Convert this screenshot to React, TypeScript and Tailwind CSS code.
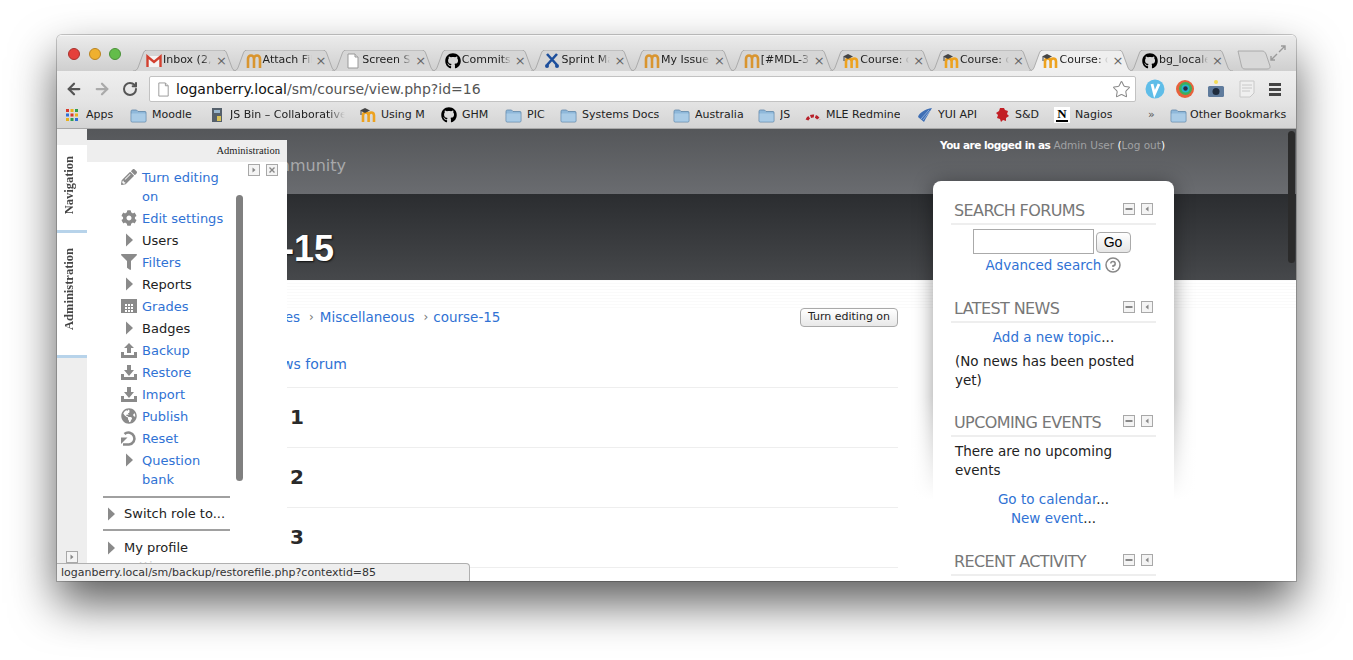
import React from 'react';
import {ArrowLeft, ArrowRight, RotateCw, Star} from 'lucide-react';
import {FaCog, FaFilter, FaGithub, FaGlobeAmericas, FaPencilAlt} from 'react-icons/fa';

const sans = 'font-["DejaVu_Sans",sans-serif]';

const MoodleM = ({cap = false}: {cap?: boolean}) => (
  <svg viewBox="0 0 16 16" className="w-4 h-4 shrink-0">
    <path
      d={cap ? 'M3 15V8.500C3 6.500 4 5.500 5.800 5.500S8.600 6.500 8.600 8.500V15M8.600 8.500C8.600 6.500 9.600 5.500 11.200 5.500S14 6.500 14 8.500V15' : 'M2 15V6C2 3.500 3.300 2.500 5 2.500S8 3.500 8 6V15M8 6C8 3.500 9.300 2.500 11 2.500S14 3.500 14 6V15'}
      fill="none"
      stroke={cap ? '#eda21f' : '#d9952f'}
      strokeWidth="2.600"
    />
    {cap && <path d="M0 3.500L5 1l5 2.500L5 6z" fill="#444" />}
    {cap && <path d="M1 4v4" stroke="#444" />}
  </svg>
);

const Doc = ({size = 16}: {size?: number}) => (
  <svg viewBox="0 0 16 16" width={size} height={size} className="shrink-0">
    <path d="M3 1h7l3 3v11H3z" fill="#fff" stroke="#999" />
    <path d="M10 1v3h3" fill="#ddd" stroke="#999" />
  </svg>
);

const Gmail = () => (
  <svg viewBox="0 0 16 16" className="w-4 h-4 shrink-0">
    <path d="M1 3h14v11H1z" fill="#f4f4f4" />
    <path d="M1.500 14V3.500L8 9l6.500-5.500V14" fill="none" stroke="#d2402f" strokeWidth="2.400" />
  </svg>
);

const Jira = () => (
  <svg viewBox="0 0 16 16" className="w-4 h-4 shrink-0">
    <path d="M3 1l10 11M13 1L3 12" stroke="#1d4f9c" strokeWidth="2.600" />
    <circle cx="3" cy="13" r="2" fill="#1d4f9c" />
    <circle cx="13" cy="13" r="2" fill="#1d4f9c" />
  </svg>
);

const Folder = () => (
  <svg viewBox="0 0 17 15" className="w-[17px] h-[15px] shrink-0">
    <path d="M1 3.500C1 2.500 1.500 2 2.500 2h4l1.500 1.500h7c.8 0 1 .5 1 1V13c0 .6-.4 1-1 1H2c-.6 0-1-.4-1-1z" fill="#8fb8da" stroke="#5f87a8" strokeWidth=".8" />
    <path d="M1.500 5.500h14V13.500h-14z" fill="#a9cbe6" />
  </svg>
);

const Apps = () => (
  <svg viewBox="0 0 14 14" className="w-[14px] h-[14px] mr-[2px] shrink-0">
    {['#d8382c', '#e9b21e', '#2f9e4f', '#2f6fd8', '#d8382c', '#e9b21e', '#e9b21e', '#2f9e4f', '#2f6fd8'].map((c, i) => (
      <rect key={i} x={1 + (i % 3) * 4.500} y={1 + Math.floor(i / 3) * 4.500} width="3" height="3" fill={c} />
    ))}
  </svg>
);

const JsBin = () => (
  <svg viewBox="0 0 16 16" className="w-4 h-4 shrink-0">
    <path d="M3 1h10v14H3z" fill="#55606b" />
    <path d="M5 3h6v3H5z" fill="#9ab6cc" />
    <path d="M8 9h4v5H8z" fill="#d8c25a" />
  </svg>
);

const Redmine = () => (
  <svg viewBox="0 0 16 14" className="w-4 h-[14px] shrink-0">
    <path d="M2 12A6.500 6.500 0 0 1 14 12" fill="none" stroke="#b8202a" strokeWidth="3" strokeDasharray="3.500 1.500" />
  </svg>
);

const Yui = () => (
  <svg viewBox="0 0 16 16" className="w-4 h-4 shrink-0">
    <path d="M15 1C8 2 2 6 1 10l6 5C9 11 12 6 15 1z" fill="#3f6fb5" />
    <path d="M12 3L4 12M13 4L6 13" stroke="#a9c4e8" strokeWidth=".7" />
  </svg>
);

const Splat = () => (
  <svg viewBox="0 0 16 16" className="w-4 h-4 shrink-0">
    <path d="M6 1h4l1 2 3 1-1 3 2 2-3 2v3l-3-1-2 2-1-3-3-1 1-3-2-2 3-2z" fill="#c21f25" />
  </svg>
);

const Nagios = () => (
  <div className="w-4 h-4 shrink-0 bg-white flex flex-col items-center font-['Liberation_Serif',serif] font-bold text-[13px] leading-[13px] text-black">
    N<div className="w-3 h-[2px] bg-black" />
  </div>
);

const tabs = [
  {icon: <Gmail />, title: 'Inbox (2,'},
  {icon: <MoodleM />, title: 'Attach Fil'},
  {icon: <Doc />, title: 'Screen Sl'},
  {icon: <FaGithub className="w-4 h-4 shrink-0 text-black" />, title: 'Commits'},
  {icon: <Jira />, title: 'Sprint Ma'},
  {icon: <MoodleM />, title: 'My Issue'},
  {icon: <MoodleM />, title: '[#MDL-3'},
  {icon: <MoodleM cap />, title: 'Course: c'},
  {icon: <MoodleM cap />, title: 'Course: c'},
  {icon: <MoodleM cap />, title: 'Course: c', active: true},
  {icon: <FaGithub className="w-4 h-4 shrink-0 text-black" />, title: 'bg_locale'},
];

const Tab = ({icon, title, active}: {icon: React.ReactNode; title: string; active?: boolean}) => (
  <div className={`relative w-[104px] h-[21px] -mr-[4.400px] shrink-0 ${active ? 'z-10' : ''}`}>
    <svg viewBox="0 0 104 21" className="absolute inset-0 w-[104px] h-[21px]">
      <path
        d="M0 21C4 21 5 18 6 15L10 4C11 1 12 0 15 0H89C92 0 93 1 94 4L98 15C99 18 100 21 104 21"
        fill={active ? '#efefef' : '#d6d6d6'}
        stroke="#a0a0a0"
        strokeWidth=".8"
      />
    </svg>
    <div className="relative flex items-center h-full pl-[13px]">
      {icon}
      <span className="w-[50px] pl-[1px] overflow-hidden whitespace-nowrap text-[11px] text-[#222] [mask-image:linear-gradient(to_right,black_80%,transparent)]">
        {title}
      </span>
      <span className="ml-[4px] text-[13px] leading-none text-[#666]">×</span>
    </div>
  </div>
);

const bookmarks: {icon: React.ReactNode; label: string; w: string; fade?: boolean}[] = [
  {icon: <Apps />, label: 'Apps', w: 'w-[65px]'},
  {icon: <Folder />, label: 'Moodle', w: 'w-[79px]'},
  {icon: <JsBin />, label: 'JS Bin – Collaborative', w: 'w-[151px]', fade: true},
  {icon: <MoodleM cap />, label: 'Using M', w: 'w-[81px]'},
  {icon: <FaGithub className="w-4 h-4 shrink-0 text-black" />, label: 'GHM', w: 'w-[64px]'},
  {icon: <Folder />, label: 'PIC', w: 'w-[55px]'},
  {icon: <Folder />, label: 'Systems Docs', w: 'w-[113px]'},
  {icon: <Folder />, label: 'Australia', w: 'w-[85px]'},
  {icon: <Folder />, label: 'JS', w: 'w-[47px]'},
  {icon: <Redmine />, label: 'MLE Redmine', w: 'w-[112px]'},
  {icon: <Yui />, label: 'YUI API', w: 'w-[77px]'},
  {icon: <Splat />, label: 'S&D', w: 'w-[60px]'},
  {icon: <Nagios />, label: 'Nagios', w: 'w-[94px]'},
];

const Tray = ({up}: {up?: boolean}) => (
  <svg viewBox="0 0 16 16" className="w-4 h-4 shrink-0 text-[#8a8a8a]" fill="currentColor">
    <path d="M0 10h3v3h10v-3h3v6H0z" />
    <path d={up ? 'M8 1l5 5h-3v5H6V6H3z' : 'M6 1h4v5h3l-5 6-5-6h3z'} />
  </svg>
);

const GradesIcon = () => (
  <svg viewBox="0 0 16 16" className="w-4 h-4 shrink-0 text-[#8a8a8a]" fill="currentColor">
    <path fillRule="evenodd" d="M0 1h16v14H0zM4 6v2h2V6zm3 0v2h2V6zm3 0v2h2V6zM4 9v2h2V9zm3 0v2h2V9zm3 0v2h2V9zm-6 3v2h2v-2zm3 0v2h2v-2zm3 0v2h2v-2z" />
  </svg>
);

const ResetIcon = () => (
  <svg viewBox="0 0 16 16" className="w-4 h-4 shrink-0 text-[#8a8a8a]" fill="none" stroke="currentColor" strokeWidth="2.600">
    <path d="M3.500 4A6 6 0 1 1 8 14.500H2" />
    <path d="M0 7.500h6.500L0 14z" fill="currentColor" stroke="none" />
  </svg>
);

const Caret = () => (
  <svg viewBox="0 0 16 16" className="w-4 h-4 shrink-0 text-[#8a8a8a]" fill="currentColor">
    <path d="M5 1.500L12 8l-7 6.500z" />
  </svg>
);

const adminItems: {icon: React.ReactNode; lines: string[]; link: boolean}[] = [
  {icon: <FaPencilAlt className="w-4 h-4 shrink-0 text-[#8a8a8a]" />, lines: ['Turn editing', 'on'], link: true},
  {icon: <FaCog className="w-4 h-4 shrink-0 text-[#8a8a8a]" />, lines: ['Edit settings'], link: true},
  {icon: <Caret />, lines: ['Users'], link: false},
  {icon: <FaFilter className="w-4 h-4 shrink-0 text-[#8a8a8a]" />, lines: ['Filters'], link: true},
  {icon: <Caret />, lines: ['Reports'], link: false},
  {icon: <GradesIcon />, lines: ['Grades'], link: true},
  {icon: <Caret />, lines: ['Badges'], link: false},
  {icon: <Tray up />, lines: ['Backup'], link: true},
  {icon: <Tray />, lines: ['Restore'], link: true},
  {icon: <Tray />, lines: ['Import'], link: true},
  {icon: <FaGlobeAmericas className="w-4 h-4 shrink-0 text-[#8a8a8a]" />, lines: ['Publish'], link: true},
  {icon: <ResetIcon />, lines: ['Reset'], link: true},
  {icon: <Caret />, lines: ['Question', 'bank'], link: true},
];

const CtrlBox = ({kind}: {kind: 'min' | 'left' | 'right' | 'close'}) => (
  <svg viewBox="0 0 12 12" className="w-3 h-3 shrink-0">
    <rect x=".5" y=".5" width="11" height="11" fill="#f4f4f4" stroke="#a8a8a8" />
    {kind === 'min' && <rect x="2.500" y="5" width="7" height="2" fill="#888" />}
    {kind === 'left' && <path d="M7.500 3.500L4.500 6l3 2.500z" fill="#888" />}
    {kind === 'right' && <path d="M4.500 3.500L7.500 6l-3 2.500z" fill="#888" />}
    {kind === 'close' && <path d="M3.500 3.500l5 5m0-5l-5 5" stroke="#888" strokeWidth="1.400" />}
  </svg>
);

const BlockHead = ({title}: {title: string}) => (
  <div className="h-[27px] border-b-2 border-[#eeeeee] flex items-center justify-between pl-[3px] pr-[3px]">
    <span className="text-[16px] tracking-[-0.6px] text-[#777777]">{title}</span>
    <div className="flex gap-[6px] mb-[3px]">
      <CtrlBox kind="min" />
      <CtrlBox kind="left" />
    </div>
  </div>
);

export default function App() {
  return (
    <div className={`w-[1353px] h-[660px] bg-white overflow-hidden pt-[35px] pl-[57px] ${sans}`}>
      <div className="relative w-[1239px] h-[546px] rounded-t-[5px] overflow-hidden flex flex-col bg-white shadow-[0_0_0_1px_rgba(0,0,0,0.2),0_22px_46px_rgba(0,0,0,0.64)]">
        {/* tab strip */}
        <div className="relative h-[36px] shrink-0 bg-gradient-to-b from-[#ebebeb] to-[#cfcfcf] flex items-end pl-[76px] border-t border-[#f6f6f6]">
          <div className="absolute left-[11px] top-[12px] flex gap-[8.500px]">
            <div className="w-3 h-3 rounded-full bg-[#e5403b] border border-[#a8322e]" />
            <div className="w-3 h-3 rounded-full bg-[#efb02e] border border-[#b98423]" />
            <div className="w-3 h-3 rounded-full bg-[#63bd4a] border border-[#4a9138]" />
          </div>
          {tabs.map((t, i) => (
            <Tab key={i} icon={t.icon} title={t.title} active={t.active} />
          ))}
          <svg viewBox="0 0 34 20" className="w-[34px] h-5 ml-[8px] mb-[1px] shrink-0">
            <path d="M1 1H25C27 1 28 2 29 4L33 16C33.500 18 32 19 30 19H8C6 19 5 18 4.500 16L1 1z" fill="#d8d8d8" stroke="#a0a0a0" strokeWidth=".8" />
          </svg>
          <svg viewBox="0 0 16 16" className="absolute right-[10px] top-[9px] w-4 h-4 text-[#9a9a9a]" fill="none" stroke="currentColor" strokeWidth="1.400">
            <path d="M9 7l6-6M11 1h4v4M7 9l-6 6M1 11v4h4" />
          </svg>
        </div>

        {/* toolbar */}
        <div className="h-[31px] shrink-0 bg-gradient-to-b from-[#efefef] to-[#e4e4e4] flex items-start pt-[5px] pl-[8px] pr-[10px]">
          <div className="flex items-center h-[26px]">
            <ArrowLeft className="w-[18px] h-[18px] text-[#555]" strokeWidth={3} />
            <ArrowRight className="w-[18px] h-[18px] ml-[10px] text-[#aaa]" strokeWidth={3} />
            <RotateCw className="w-4 h-4 ml-[11px] text-[#555]" strokeWidth={3} />
          </div>
          <div className="ml-[11px] w-[987px] h-[26px] bg-white border border-[#c2c2c2] rounded-[2px] flex items-center pl-[6px] pr-[4px]">
            <Doc size={15} />
            <span className="ml-[5px] text-[14px] text-[#111] whitespace-nowrap">
              loganberry.local<span className="text-[#555]">/sm/course/view.php?id=16</span>
            </span>
            <Star className="ml-auto w-[19px] h-[19px] text-[#888]" strokeWidth={1.300} />
          </div>
          <div className="flex items-center h-[26px] ml-[9px]">
            <svg viewBox="0 0 20 20" className="w-5 h-5 shrink-0">
              <circle cx="10" cy="10" r="9.500" fill="#5fbde8" />
              <path d="M7 5l2.500 10L14 5" fill="none" stroke="#fff" strokeWidth="2.800" />
            </svg>
            <svg viewBox="0 0 20 20" className="w-5 h-5 ml-[10px] shrink-0">
              <circle cx="10" cy="10" r="9" fill="#e8613c" />
              <circle cx="10.500" cy="9.500" r="6.500" fill="#3fae5a" />
              <circle cx="10.500" cy="9.500" r="4" fill="#23b6c9" />
              <circle cx="10.500" cy="9.500" r="2.200" fill="#2a2a4a" />
            </svg>
            <svg viewBox="0 0 20 20" className="w-5 h-5 ml-[11px] shrink-0">
              <circle cx="10" cy="3" r="2" fill="#f3dc55" />
              <rect x="2" y="7" width="16" height="11" rx="1.500" fill="#5f7b9c" />
              <circle cx="10" cy="12.500" r="3.500" fill="#1f2c3d" />
            </svg>
            <svg viewBox="0 0 18 20" className="w-[18px] h-5 ml-[12px] shrink-0">
              <path d="M2 2h14v12l-4 4H2z" fill="#efefef" stroke="#c8c8c8" />
              <path d="M4 6h10M4 9h10M4 12h8" stroke="#c8c8c8" />
            </svg>
            <div className="ml-[13px] w-[12px] flex flex-col gap-[2px]">
              <div className="h-[3px] bg-[#444]" />
              <div className="h-[3px] bg-[#444]" />
              <div className="h-[3px] bg-[#444]" />
            </div>
          </div>
        </div>

        {/* bookmarks bar */}
        <div className="h-[27px] shrink-0 bg-gradient-to-b from-[#e4e4e4] to-[#d4d4d4] border-b border-[#a8a8a8] flex items-center pl-[8px] text-[11px] text-[#222]">
          {bookmarks.map((b) => (
            <div key={b.label} className={`flex items-center gap-[5px] shrink-0 ${b.w}`}>
              {b.icon}
              <span className={`whitespace-nowrap overflow-hidden ${b.fade ? 'w-[115px] [mask-image:linear-gradient(to_right,black_85%,transparent)]' : ''}`}>{b.label}</span>
            </div>
          ))}
          <span className="w-[22px] text-[#555]">»</span>
          <Folder />
          <span className="ml-[3px] whitespace-nowrap">Other Bookmarks</span>
        </div>

        {/* page */}
        <div className="relative flex-1 flex min-h-0 overflow-hidden">
          {/* dock rail */}
          <div className="w-[30px] shrink-0 bg-[#eeeeee] flex flex-col pt-[16px] relative">
            <div className="h-[88px] bg-white border-b-[3px] border-[#b7d3ea] flex items-center justify-center pb-[4px] pr-[5px]">
              <span className="[writing-mode:vertical-rl] rotate-180 font-['Liberation_Serif',serif] font-bold text-[12.500px] text-[#444]">Navigation</span>
            </div>
            <div className="h-[125px] bg-white border-b-[3px] border-[#b7d3ea] flex items-center justify-center pb-[10px] pr-[5px]">
              <span className="[writing-mode:vertical-rl] rotate-180 font-['Liberation_Serif',serif] font-bold text-[12.500px] text-[#444]">Administration</span>
            </div>
            <div className="mt-auto mb-[18px] ml-[9px]">
              <CtrlBox kind="right" />
            </div>
          </div>

          {/* page column */}
          <div className="flex-1 min-w-0 flex flex-col">
            <div className="h-[65px] shrink-0 bg-gradient-to-b from-[#55575a] to-[#6a6c70] flex items-start">
              <span className="w-[259px] mt-[26px] text-[16px] leading-[22px] text-right text-[#a8a9ab] whitespace-nowrap">Community</span>
              <span className="ml-[594px] mt-[9px] text-[10.500px] text-[#a0a1a3] whitespace-nowrap">
                <span className="font-bold text-white tracking-[-0.5px]">You are logged in as </span>Admin User <span className="text-white">(</span>Log out<span className="text-white">)</span>
              </span>
            </div>
            <div className="h-[86px] shrink-0 bg-gradient-to-b from-[#2b2d30] to-[#46484b] flex items-center">
              <span className="w-[247px] mt-[24px] text-right font-['Liberation_Sans',sans-serif] font-bold text-[36px] text-white whitespace-nowrap [text-shadow:1px_1px_2px_rgba(0,0,0,0.8)]">course-15</span>
            </div>
            <div className="flex-1 flex min-h-0 bg-[repeating-linear-gradient(to_bottom,#fafafa_0px,#fafafa_1px,#ffffff_1px,#ffffff_3px)] bg-[length:100%_30px] bg-no-repeat">
              <div className="w-[811px] shrink-0 flex flex-col">
                <div className="mt-[27px] h-[20px] flex items-center text-[13.500px] text-[#3072d4] whitespace-nowrap">
                  <span className="w-[213px] text-right">Courses</span>
                  <span className="ml-[9px] text-[#777] text-[12px]">›</span>
                  <span className="ml-[6px]">Miscellaneous</span>
                  <span className="ml-[9px] text-[#777] text-[12px]">›</span>
                  <span className="ml-[5px]">course-15</span>
                  <button className="ml-auto h-[19px] w-[98px] bg-gradient-to-b from-white to-[#e8e8e8] border border-[#aaaaaa] rounded-[4px] text-[11px] text-[#222] flex items-center justify-center">
                    Turn editing on
                  </button>
                </div>
                <div className="mt-[28px] pb-[14px] border-b border-[#eeeeee] text-[14px] leading-[18px] text-[#3072d4] whitespace-nowrap">
                  <div className="w-[260px] text-right">News forum</div>
                </div>
                {['1', '2', '3'].map((n) => (
                  <div key={n} className="h-[60px] shrink-0 border-b border-[#eeeeee] flex items-center pb-[1px] text-[20px] font-bold text-[#2a2a2a] whitespace-nowrap">
                    <span className="w-[217px] text-right">Topic {n}</span>
                  </div>
                ))}
              </div>

              {/* right blocks */}
              <div className="relative ml-[35px] w-[241px] h-[400px] -mt-[99px] shrink-0 text-[13.500px] text-[#222]">
                <div className="absolute top-0 inset-x-0 h-[320px] bg-white rounded-t-[8px] shadow-[0_2px_20px_rgba(0,0,0,0.4)]" />
                <div className="absolute top-[215px] -inset-x-[24px] h-[130px] bg-gradient-to-b from-transparent to-white to-80%" />
                <div className="relative pt-[17px] px-[18px]">
                  <BlockHead title="SEARCH FORUMS" />
                  <div className="flex justify-center items-start mt-[4px] gap-[2px] pr-[4px]">
                    <div className="w-[121px] h-[25px] border border-[#aaaaaa] bg-white" />
                    <div className="mt-[3px] w-[35px] h-[21px] bg-gradient-to-b from-white to-[#e6e6e6] border border-[#aaaaaa] rounded-[4px] font-['Liberation_Sans',sans-serif] text-[14px] text-black flex items-center justify-center">Go</div>
                  </div>
                  <div className="flex items-center justify-center h-[22px] text-[#3072d4]">
                    Advanced search
                    <svg viewBox="0 0 16 16" className="w-4 h-4 ml-[4px] shrink-0 text-[#888]" fill="none" stroke="currentColor">
                      <circle cx="8" cy="8" r="7" strokeWidth="1.500" />
                      <path d="M5.800 6.500A2.200 2.200 0 1 1 8 8.800v1.200M8 11.500v1.500" strokeWidth="1.500" />
                    </svg>
                  </div>
                  <div className="mt-[20px]">
                    <BlockHead title="LATEST NEWS" />
                    <div className="text-center leading-[19px] mt-[5px]"><span className="text-[#3072d4]">Add a new topic</span>...</div>
                    <div className="px-[4px] leading-[19px] mt-[5px]">(No news has been posted yet)</div>
                  </div>
                  <div className="mt-[20px]">
                    <BlockHead title="UPCOMING EVENTS" />
                    <div className="px-[4px] leading-[19px] mt-[5px]">There are no upcoming events</div>
                    <div className="text-center leading-[19px] mt-[10px]"><span className="text-[#3072d4]">Go to calendar</span>...</div>
                    <div className="text-center leading-[19px]"><span className="text-[#3072d4]">New event</span>...</div>
                  </div>
                  <div className="mt-[21px]">
                    <BlockHead title="RECENT ACTIVITY" />
                  </div>
                </div>
              </div>
            </div>
          </div>

          {/* page scrollbar */}
          <div className="absolute right-[1px] top-[2px] w-[7px] h-[132px] rounded-full bg-[#2b2b2b]" />

          {/* docked administration panel */}
          <div className="absolute left-[30px] top-[11px] bottom-0 w-[200px] bg-white flex flex-col">
            <div className="h-[22px] shrink-0 bg-[#eeeeee] text-right pr-[7px] pt-[4px] font-['Liberation_Serif',serif] text-[10.500px] leading-[14px] text-[#222]">Administration</div>
            <div className="absolute right-[9px] top-[24px] flex gap-[6px]">
              <CtrlBox kind="right" />
              <CtrlBox kind="close" />
            </div>
            <div className="absolute left-[149px] top-[55px] w-[7px] h-[286px] rounded-full bg-[#808080]" />
            <div className="pt-[6px] pl-[34px] w-[150px] text-[13px] leading-[19px]">
              {adminItems.map((it) => (
                <div key={it.lines[0]} className="flex items-start gap-[5px] pb-[3px]">
                  <div className="pt-[1px]">{it.icon}</div>
                  <div className={it.link ? 'text-[#3072d4]' : 'text-[#222]'}>
                    {it.lines.map((l) => (
                      <div key={l} className="whitespace-nowrap">{l}</div>
                    ))}
                  </div>
                </div>
              ))}
            </div>
            <div className="ml-[16px] w-[127px] mt-[4px] border-t-2 border-[#a0a0a0] h-[33px] flex items-center gap-[5px] text-[13px] text-[#222] whitespace-nowrap">
              <Caret />
              Switch role to...
            </div>
            <div className="ml-[16px] w-[127px] border-t-2 border-[#a0a0a0] pt-[7px] flex items-start gap-[5px] text-[13px] leading-[19px] text-[#222] whitespace-nowrap">
              <div className="pt-[2px]"><Caret /></div>
              <div>My profile<div className="text-[#cfcfcf]">settings</div></div>
            </div>
          </div>

          {/* status bubble */}
          <div className="absolute left-0 bottom-0 w-[413px] h-[18px] bg-[#eeeeee] border-t border-r border-[#b0b0b0] rounded-tr-[4px] pl-[4px] text-[11px] leading-[17px] text-[#333] whitespace-nowrap">
            loganberry.local/sm/backup/restorefile.php?contextid=85
          </div>
        </div>
      </div>
    </div>
  );
}
